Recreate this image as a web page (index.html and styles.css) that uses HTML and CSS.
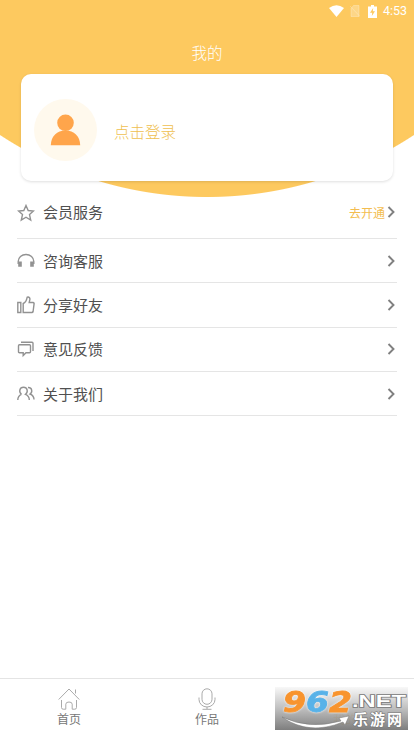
FILE: index.html
```
<!DOCTYPE html>
<html lang="zh-CN">
<head>
<meta charset="utf-8">
<meta name="viewport" content="width=device-width, initial-scale=1">
<title>我的</title>
<link rel="stylesheet" href="styles.css">
</head>
<body>
<header class="hero">
  <div class="status">
    <svg width="15" height="12" viewBox="0 0 15 12"><path d="M0 3Q7.500-2.400 15 3L7.500 12Z" fill="#fff"/></svg>
    <svg class="sim" width="10" height="12" viewBox="0 0 10 12"><path d="M3.500.5H9v11H1V3.500ZM0 1l10 10.500" fill="#fff" fill-opacity=".25" stroke="#fff" stroke-opacity=".25"/></svg>
    <svg class="battery" width="9" height="13" viewBox="0 0 9 13"><path d="M3 0h3v1.500h3V13H0V1.500h3Z" fill="#fff"/><path d="M5.200 3 2 7.700h2.200L3.800 11 7 6.300H4.800Z" fill="#fdc95f"/></svg>
    <span>4:53</span>
  </div>
  <h1 class="title">我的</h1>
  <section class="card">
    <div class="avatar">
      <svg width="31" height="32" viewBox="0 0 31 32" fill="#ffa54b"><circle cx="15.500" cy="8.800" r="8.300"/><path d="M.8 31.300C1 22 7 16.500 15.500 16.500S30 22 30.200 31.300Z"/></svg>
    </div>
    <span>点击登录</span>
  </section>
</header>
<main class="menu">
  <div class="row first">
    <svg class="icon" viewBox="0 0 18 18"><path d="m9 1.500 2.200 5 5.300.5-4 3.600 1.200 5.400L9 13.200 4.300 16l1.200-5.400-4-3.600 5.300-.5Z"/></svg>
    <span>会员服务</span><em>去开通</em>
    <svg class="arrow" viewBox="0 0 8 12"><path d="m1.500 1 5 5-5 5"/></svg>
  </div>
  <div class="row">
    <svg class="icon" viewBox="0 0 18 18"><path d="M1.200 12V9.500a7.800 7 0 0 1 15.600 0V12"/><path d="M3 9.500v5.300M15 9.500v5.300" stroke-width="3.600"/></svg>
    <span>咨询客服</span>
    <svg class="arrow" viewBox="0 0 8 12"><path d="m1.500 1 5 5-5 5"/></svg>
  </div>
  <div class="row">
    <svg class="icon" viewBox="0 0 18 18"><path d="M.8 6.500h3v10h-3ZM6.200 7.500c3-1 3.500-3.500 4-6.300 2-.6 3.200 1 2.500 3L12.200 6.500h4q1 0 .9 1.200l-1 7.800q-.2 1-1.300 1H6.200Z"/></svg>
    <span>分享好友</span>
    <svg class="arrow" viewBox="0 0 8 12"><path d="m1.500 1 5 5-5 5"/></svg>
  </div>
  <div class="row">
    <svg class="icon" viewBox="0 0 18 18"><path d="M2.500 4.800h10q1 0 1 1v6q0 1-1 1H9L6.200 15.500V12.800H2.500q-1 0-1-1v-6q0-1 1-1ZM4 2.300h11q1 0 1 1V11"/></svg>
    <span>意见反馈</span>
    <svg class="arrow" viewBox="0 0 8 12"><path d="m1.500 1 5 5-5 5"/></svg>
  </div>
  <div class="row">
    <svg class="icon" viewBox="0 0 18 18"><path d="M4.500 9.300C1.500 7 2.500 2.300 6.500 2.300s5 4.700 2 7c2.500 1 3.800 2.700 3.800 5.700M.8 15c0-3 1.200-4.700 3.700-5.700M11 2.500c4-.3 5 4.300 2 6.500 2.500 1 4 2.500 4 5.500"/></svg>
    <span>关于我们</span>
    <svg class="arrow" viewBox="0 0 8 12"><path d="m1.500 1 5 5-5 5"/></svg>
  </div>
</main>
<nav class="tabs">
  <div class="tab">
    <svg width="22" height="22" viewBox="0 0 22 22"><path d="M.7 11.500 11 1l10.300 10.500M17.500 1.500v4M3.500 12v7.500q0 1.700 1.700 1.700h2.600v-5q0-2.200 3.200-2.200t3.200 2.200v5h2.600q1.700 0 1.700-1.700V12"/></svg>
    <span>首页</span>
  </div>
  <div class="tab">
    <svg width="22" height="22" viewBox="0 0 22 22"><rect x="6" y=".8" width="10" height="15.500" rx="5"/><path d="M3 9.500v2a8 7.500 0 0 0 16 0v-2M11 19v2M6.500 21.300h9"/></svg>
    <span>作品</span>
  </div>
  <div class="tab active"><span>我的</span></div>
</nav>
<svg class="mark" width="133" height="43" viewBox="0 0 133 43">
  <defs>
    <linearGradient id="shade" x2="0" y2="1"><stop stop-color="#f7f7f7"/><stop offset=".5" stop-color="#b8b8b8"/><stop offset="1" stop-color="#707070"/></linearGradient>
  </defs>
  <rect width="133" height="43" fill="url(#shade)" fill-opacity=".9"/>
  <g class="digits">
    <text x="8" y="25" textLength="23" lengthAdjust="spacingAndGlyphs" fill="#f8942e" stroke="#f8942e">9</text>
    <text x="31" y="25" textLength="23" lengthAdjust="spacingAndGlyphs" fill="#58b2e8" stroke="#58b2e8">6</text>
    <text x="54" y="25" textLength="23" lengthAdjust="spacingAndGlyphs" fill="#f8942e" stroke="#f8942e">2</text>
  </g>
  <text class="net" x="77" y="20" textLength="54" lengthAdjust="spacingAndGlyphs">.NET</text>
  <path d="M7 30Q34 43 66 34L64 31 74 29 70 38 68 35Q34 49 7 30Z" fill="#fff" stroke="#777" stroke-width=".5"/>
  <text class="site" x="78" y="38" textLength="49">乐游网</text>
</svg>
</body>
</html>
```
FILE: styles.css
```
* { box-sizing: border-box; }
body {
  margin: 0;
  height: 736px;
  display: flex;
  flex-direction: column;
  position: relative;
  overflow: hidden;
  background: #fff;
  color: #505050;
  font-family: "Noto Sans CJK SC", sans-serif;
}
svg { display: block; flex: none; }
.hero {
  height: 197px;
  flex: none;
  padding: 0 21px;
  background: radial-gradient(circle 376.5px at 207px -179.500px, #fdc95f 376px, #fff 377px);
}
.status {
  height: 22px;
  margin-right: -14px;
  display: flex;
  align-items: center;
  justify-content: flex-end;
  color: #fff;
  font: 400 12.500px/22px Roboto, sans-serif;
}
.sim { margin-left: 6px; }
.battery { margin: 0 6px 0 8px; }
.title {
  height: 52px;
  margin: 0;
  padding-top: 19px;
  text-align: center;
  color: #fff;
  font-size: 15.500px;
  line-height: 22px;
  font-weight: 300;
}
.card {
  height: 107px;
  padding: 4px 14px 0 13px;
  display: flex;
  align-items: center;
  gap: 17px;
  border-radius: 10px;
  background: #fff;
  box-shadow: 0 1px 3px rgba(0, 0, 0, .13);
  color: #efbf50;
  font-size: 15.500px;
  font-weight: 300;
}
.card span { padding-top: 2px; }
.avatar {
  width: 63px;
  height: 62px;
  display: grid;
  place-items: center;
  border-radius: 50%;
  background: #fff9ed;
}
.menu { flex: 1; padding: 0 17px; }
.row {
  height: 44.300px;
  display: flex;
  align-items: center;
  border-bottom: 1px solid #e5e5e5;
  font-size: 15px;
}
.row > span { padding-bottom: 1px; }
.first { height: 42px; padding-bottom: 10px; }
.first > span { padding-bottom: 2px; }
.icon {
  width: 18px;
  height: 18px;
  margin-right: 8px;
  fill: none;
  stroke: #929292;
  stroke-width: 1.400;
}
.arrow {
  width: 8px;
  height: 12px;
  margin: 0 2px 0 auto;
  fill: none;
  stroke: #808080;
  stroke-width: 1.900;
}
.row em {
  margin-left: auto;
  font-size: 12px;
  font-style: normal;
  color: #f3bd50;
}
.row em + .arrow { margin: 0 2px 1px; }
.tabs {
  height: 58px;
  display: flex;
  border-top: 1px solid #e4e4e4;
}
.tab {
  flex: 1;
  padding-top: 9px;
  display: flex;
  flex-direction: column;
  align-items: center;
  color: #777;
  font-size: 12px;
  line-height: 18px;
}
.active { padding-top: 31px; color: #fdc95f; }
.tab svg { fill: none; stroke: #aaa; stroke-width: 1; }
.mark { position: absolute; left: 275px; top: 687px; overflow: visible; }
.digits {
  font: italic 700 29px "DejaVu Sans", sans-serif;
  stroke-width: .8;
  filter: drop-shadow(0 0 1px #fff);
}
.net {
  font: 700 17px "Liberation Sans", sans-serif;
  fill: #fff;
  stroke: #777;
  stroke-width: 1.500;
  paint-order: stroke;
}
.site {
  font: 700 15px "Noto Sans CJK SC", sans-serif;
  fill: #fff;
  stroke: #777;
  stroke-width: 1.200;
  paint-order: stroke;
}
```
